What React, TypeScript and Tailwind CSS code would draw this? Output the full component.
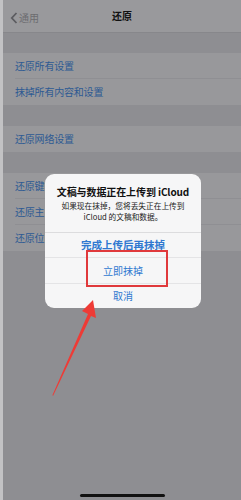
import React from "react";

const font = { fontFamily: '"Noto Sans CJK SC", "Noto Sans", sans-serif' };

function Row({ label, last }: { label: string; last?: boolean }) {
  return (
    <div className="h-[26px] bg-[#98989b] flex items-center pl-[12px] relative">
      <span className="text-[10px] text-[#2d5a93] tracking-[-0.2px] leading-none whitespace-nowrap">{label}</span>
      {!last && <div className="absolute left-[12px] right-0 bottom-0 h-px bg-[#8f8f93]" />}
    </div>
  );
}

export default function App() {
  return (
    <div className="w-[241px] h-[500px] relative overflow-hidden bg-[#8e8e92] flex" style={font}>
      <div className="w-[3px] bg-[#c2c2c4]" />
      <div className="flex-1 flex flex-col">
        <div className="h-[33px] bg-[#99999c] border-b border-[#87878b] relative flex items-center justify-center">
          <div className="absolute left-[7px] top-[12px] flex items-center gap-[1px]">
            <svg width="8" height="12" viewBox="0 0 8 12">
              <path d="M6.5 1 L1.8 6 L6.5 11" stroke="#5c5c60" strokeWidth="1.8" fill="none" />
            </svg>
            <span className="text-[10px] text-[#6c6c70] leading-none">通用</span>
          </div>
          <span className="text-[10px] font-bold text-[#111] leading-none -mt-[1px]">还原</span>
        </div>
        <div className="h-[20px]" />
        <Row label="还原所有设置" />
        <Row label="抹掉所有内容和设置" last />
        <div className="h-[21px]" />
        <Row label="还原网络设置" last />
        <div className="h-[21px]" />
        {/* only the part not hidden by the alert */}
        <Row label="还原键" />
        <Row label="还原主" />
        <Row label="还原位" last />
        <div className="flex-1" />
        <div className="h-[6px] flex justify-center">
          <div className="w-[85px] h-[2.5px] bg-[#111] rounded-full" />
        </div>
      </div>

      {/* alert */}
      <div className="absolute left-[45px] top-[174px] w-[156px] h-[134px] bg-[#f6f6f7] rounded-[9px] flex flex-col">
        <div className="pt-[11px] px-[6px] h-[58px] flex flex-col items-center">
          <div className="text-[10px] font-bold text-[#111] leading-[14.5px] whitespace-nowrap tracking-[-0.1px]">文稿与数据正在上传到 iCloud</div>
          <div className="text-[7.7px] text-[#222] leading-[11.2px] text-center whitespace-nowrap">
            如果现在抹掉，您将丢失正在上传到
            <br />
            iCloud 的文稿和数据。
          </div>
        </div>
        <div className="h-[25px] border-t border-[#dcdcde] flex items-center justify-center">
          <span className="text-[10.5px] font-bold text-[#2f78d0] leading-none">完成上传后再抹掉</span>
        </div>
        <div className="h-[26px] border-t border-[#e4e4e6] flex items-center justify-center">
          <span className="text-[10px] text-[#2f78d0] leading-none">立即抹掉</span>
        </div>
        <div className="h-[25px] border-t border-[#e4e4e6] flex items-center justify-center">
          <span className="text-[10px] text-[#2f78d0] leading-none">取消</span>
        </div>
        <div className="absolute left-[41px] top-[76px] w-[82px] h-[37px] border-2 border-[#e0393c]" />
      </div>

      {/* annotation arrow */}
      <svg className="absolute left-0 top-0" width="241" height="500" viewBox="0 0 241 500">
        <polygon points="93,300 96,318 91,316 53,396 52.5,395 88,314 82,311" fill="#ee3b36" />
      </svg>
    </div>
  );
}
